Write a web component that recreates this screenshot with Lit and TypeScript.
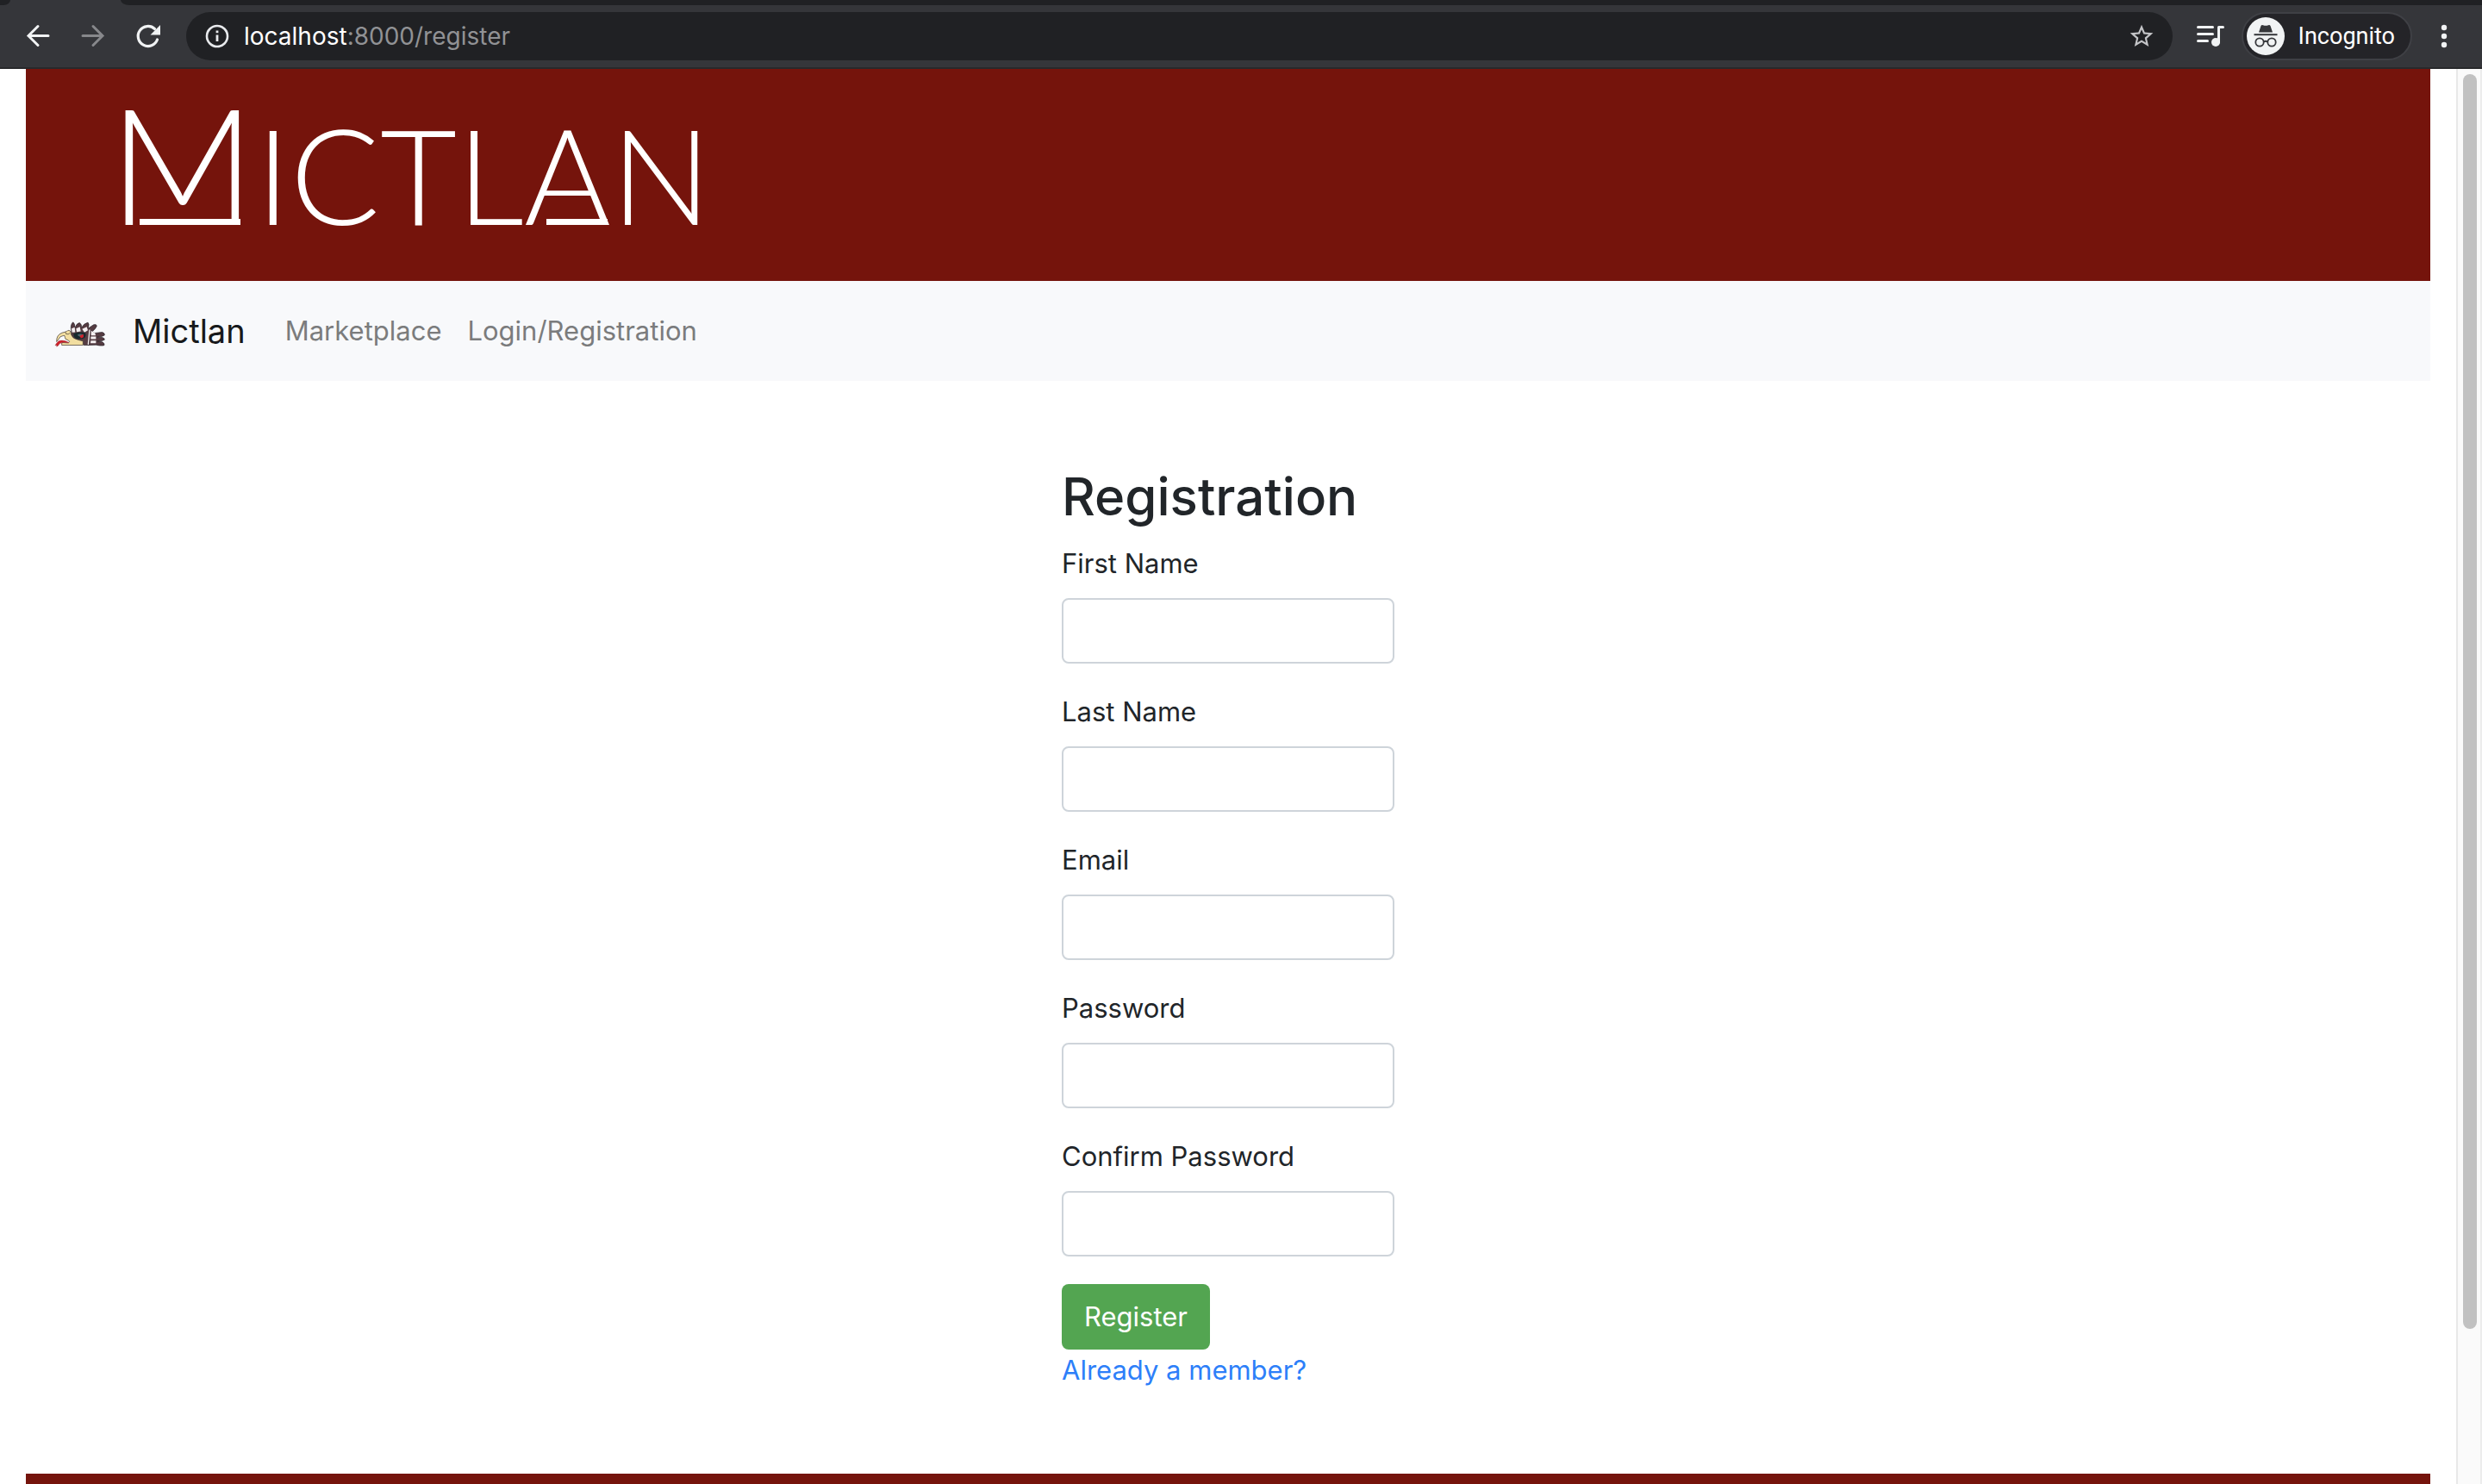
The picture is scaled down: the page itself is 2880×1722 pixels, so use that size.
import { LitElement, html, css, svg } from "lit";
import { customElement } from "lit/decorators.js";

const fields = [
  { id: "first-name", label: "First Name", type: "text" },
  { id: "last-name", label: "Last Name", type: "text" },
  { id: "email", label: "Email", type: "email" },
  { id: "password", label: "Password", type: "password" },
  { id: "confirm-password", label: "Confirm Password", type: "password" },
];

@customElement("browser-bar")
class BrowserBar extends LitElement {
  static styles = css`
    :host {
      display: block;
      flex: none;
      font-family: Roboto, "Liberation Sans", sans-serif;
      background: #35363a;
      border-bottom: 2px solid #28292b;
    }
    .tabs {
      display: flex;
      height: 6px;
      background: #35363a;
    }
    .tab-before {
      width: 12px;
      background: #202124;
      border-bottom-right-radius: 8px 6px;
    }
    .tab-active {
      width: 128px;
    }
    .tab-rest {
      flex: 1;
      background: #202124;
      border-bottom-left-radius: 10px 6px;
    }
    .tools {
      display: flex;
      align-items: center;
      padding: 8px 32px 8px 28px;
    }
    button {
      display: flex;
      align-items: center;
      border: 0;
      padding: 0;
      margin: 0;
      background: none;
      color: #f1f3f4;
      font: inherit;
    }
    svg {
      display: block;
    }
    .history {
      display: flex;
      gap: 32px;
      margin-right: 28px;
    }
    .address {
      flex: 1;
      display: flex;
      align-items: center;
      height: 56px;
      box-sizing: border-box;
      padding: 0 20px;
      border-radius: 28px;
      background: #202124;
    }
    .url {
      flex: 1;
      margin-left: 15px;
      font-family: Inter, "Liberation Sans", sans-serif;
      font-size: 28px;
      line-height: 36px;
      color: #919295;
    }
    .host {
      color: #ffffff;
    }
    .queue {
      margin: 0 18px 0 26px;
    }
    .profile {
      gap: 16px;
      height: 56px;
      box-sizing: border-box;
      padding: 0 18px 0 4px;
      border: 2px solid #3f4045;
      border-radius: 28px;
      background: #242428;
      color: #ffffff;
      font-size: 27px;
      line-height: 36px;
    }
    .menu {
      margin-left: 25px;
    }
  `;

  render() {
    return html`
      <div class="tabs">
        <div class="tab-before"></div>
        <div class="tab-active"></div>
        <div class="tab-rest"></div>
      </div>
      <div class="tools">
        <div class="history">
          <button aria-label="Back">
            <svg width="32" height="32" viewBox="0 0 32 32" fill="none" stroke="#f1f3f4" stroke-width="3" stroke-linecap="round" stroke-linejoin="miter">
              <path d="M28 15.500H5M16 4.500L5 15.500L16 26.500" />
            </svg>
          </button>
          <button aria-label="Forward">
            <svg width="32" height="32" viewBox="0 0 32 32" fill="none" stroke="#87888b" stroke-width="3" stroke-linecap="round">
              <path d="M4 15.500H27M16 4.500L27 15.500L16 26.500" />
            </svg>
          </button>
          <button aria-label="Reload">
            <svg width="32" height="32" viewBox="0 0 32 32">
              <path d="M26.500 20A11.500 11.500 0 1 1 23.500 7.500" fill="none" stroke="#f1f3f4" stroke-width="3.200" stroke-linecap="round" />
              <path d="M30 3V14.500H18.500Z" fill="#f1f3f4" />
            </svg>
          </button>
        </div>
        <div class="address">
          <svg width="32" height="32" viewBox="0 0 32 32" fill="none" stroke="#e8eaed">
            <circle cx="16" cy="16" r="12" stroke-width="2.600" />
            <path d="M16 14.500V22" stroke-width="2.800" />
            <path d="M16 9.500V12.200" stroke-width="2.800" />
          </svg>
          <span class="url"><span class="host">localhost</span>:8000/register</span>
          <button aria-label="Bookmark this page">
            <svg width="32" height="32" viewBox="0 0 24 24" fill="#c4c5c8">
              <path d="M22 9.240l-7.190-.620L12 2 9.190 8.630 2 9.240l5.460 4.730L5.820 21 12 17.270 18.180 21l-1.630-7.030L22 9.240zM12 15.400l-3.760 2.270 1-4.280-3.320-2.880 4.380-.380L12 6.100l1.710 4.040 4.380.380-3.320 2.880 1 4.280L12 15.400z" />
            </svg>
          </button>
        </div>
        <button class="queue" aria-label="Media controls">
          <svg width="36" height="32" viewBox="0 0 36 32">
            <path d="M3.500 5.500H20.500M3.500 13.500H20.500M3.500 21.500H14.500" stroke="#f1f3f4" stroke-width="3" stroke-linecap="round" />
            <circle cx="24" cy="23" r="5" fill="#f1f3f4" />
            <path d="M27.500 23V5.500H32.500" stroke="#f1f3f4" stroke-width="3" stroke-linecap="round" stroke-linejoin="round" fill="none" />
          </svg>
        </button>
        <button class="profile">
          <svg width="44" height="44" viewBox="0 0 44 44">
            <circle cx="22" cy="22" r="22" fill="#f1f3f4" />
            <path d="M14 17.500L16.500 10Q17.300 8.500 19 9.300Q22 10.300 25 9.300Q26.700 8.500 27.500 10L30 17.500Z" fill="#35363a" />
            <path d="M8.500 20.200H35.500" stroke="#35363a" stroke-width="2" />
            <g fill="none" stroke="#35363a" stroke-width="1.800">
              <circle cx="15" cy="29" r="4.700" />
              <circle cx="29" cy="29" r="4.700" />
              <path d="M19.700 28.500Q22 27 24.300 28.500" />
            </g>
          </svg>
          Incognito
        </button>
        <button class="menu" aria-label="Menu">
          <svg width="24" height="32" viewBox="0 0 24 32" fill="#f1f3f4">
            <circle cx="12" cy="6" r="3.200" />
            <circle cx="12" cy="16" r="3.200" />
            <circle cx="12" cy="26" r="3.200" />
          </svg>
        </button>
      </div>
    `;
  }
}

const bird = svg`
  <path d="M154 66L165 58L176 51Q186 48 187 55Q184 64 170 76L180 80L206 77Q215 80 214 87Q208 93 188 94L206 95Q215 98 214 103Q206 109 188 108L206 111Q215 116 213 122Q206 126 184 121L158 122Z" fill="#553c42" stroke="#292328" stroke-width="2" />
  <path d="M167 72L181 80L183 88L167 88ZM166 92H184V101H166ZM166 106H184V115H165Z" fill="#f4eff0" />
  <path d="M98 70Q94 52 104 42Q111 46 111 62Q116 46 127 44Q136 50 133 62Q142 46 156 43Q162 48 157 62L165 70L158 122H142L126 104L98 96Z" fill="#553c42" stroke="#292328" stroke-width="2" />
  <path d="M99 64L110 60L112 77L101 78ZM115 64L128 58L131 74L117 76ZM136 66L152 58L156 70L144 78Z" fill="#f4eff0" />
  <path d="M162 68L157 120" stroke="#f4eff0" stroke-width="4" />
  <path d="M47 110Q46 86 66 79Q82 76 90 70Q98 72 98 86Q104 100 120 103L139 108V122H65V113L88 114Q96 111 88 105Q74 102 76 94Q77 87 70 89Q58 90 53 103Z" fill="#f2dea0" stroke="#3a3029" stroke-width="2" />
  <path d="M83 72Q75 77 80 83Q88 86 94 80" fill="#f2dea0" stroke="#3a3029" stroke-width="2" />
  <path d="M89 112Q68 102 54 108Q45 116 42 123L48 122L47 127Q54 125 57 117Q69 110 89 114Z" fill="#cf2029" stroke="#7b1a20" stroke-width="1" />
  <path d="M106 82Q118 75 146 78Q152 88 144 97Q130 103 116 99Q105 94 106 82Z" fill="#18282d" />
  <path d="M119 87Q129 79 141 86L139 94Q128 96 119 87Z" fill="#4d6a70" />
  <path d="M127 90L140 84L141 94L132 98Z" fill="#d3212c" />
`;

@customElement("app-root")
class AppRoot extends LitElement {
  static styles = css`
    :host {
      display: flex;
      flex-direction: column;
      height: 100vh;
      overflow: hidden;
      background: #ffffff;
      color: #212529;
      font-family: Inter, "Liberation Sans", sans-serif;
      font-size: 31px;
      line-height: 48px;
    }
    .viewport {
      flex: 1;
      min-height: 0;
      display: flex;
    }
    .page {
      flex: 1;
      display: flex;
      flex-direction: column;
      padding: 0 30px;
    }
    .scrollbar {
      box-sizing: border-box;
      width: 30px;
      padding: 6px 4px 0 6px;
      border-left: 2px solid #e8e8e8;
      border-right: 2px solid #ececec;
      background: #fafafa;
    }
    .thumb {
      width: 16px;
      height: 89%;
      border-radius: 8px;
      background: #c1c1c1;
    }
    .banner {
      background: #75140c;
      color: #ffffff;
      padding: 0 96px;
      height: 246px;
      box-sizing: border-box;
    }
    .wordmark {
      margin: 0;
      padding-top: 8px;
      font-family: Lato, "Open Sans", sans-serif;
      font-weight: 300;
      font-size: 154px;
      line-height: 200px;
      text-transform: uppercase;
    }
    .initial {
      font-size: 188px;
    }
    .initial,
    .based {
      position: relative;
    }
    /* Foot bars that lie over the baseline of the M and the A. */
    .initial::after,
    .based::after {
      content: "";
      position: absolute;
      height: 7px;
      background: #ffffff;
    }
    .initial::after {
      bottom: 40px;
      left: 36px;
      right: 18px;
    }
    .based::after {
      bottom: 33px;
      left: 26px;
      right: 4px;
    }
    .nav {
      display: flex;
      align-items: center;
      height: 116px;
      padding: 0 32px;
      background: #f8f9fb;
    }
    .nav a {
      text-decoration: none;
    }
    .brand {
      display: flex;
      align-items: center;
      gap: 32px;
      margin-right: 46px;
      color: #17191b;
      font-size: 38px;
    }
    .brand svg {
      display: block;
      margin-top: 8px;
    }
    .links {
      display: flex;
      gap: 30px;
      margin: 0;
      padding: 0;
      list-style: none;
    }
    .links a {
      color: #7b7c7d;
    }
    .main {
      display: flex;
      justify-content: center;
      padding: 96px 0;
    }
    .form {
      display: flex;
      flex-direction: column;
      align-items: flex-start;
    }
    .title {
      margin: 0 0 16px;
      font-size: 60px;
      font-weight: 500;
      line-height: 76px;
    }
    .field {
      display: flex;
      flex-direction: column;
      gap: 16px;
      margin-bottom: 32px;
    }
    .field input {
      box-sizing: border-box;
      width: 386px;
      height: 76px;
      padding: 12px 24px;
      border: 2px solid #ced4da;
      border-radius: 8px;
      background: #ffffff;
      color: inherit;
      font: inherit;
    }
    .submit {
      height: 76px;
      padding: 0 26px;
      border: 0;
      border-radius: 8px;
      background: #53a551;
      color: #ffffff;
      font: inherit;
    }
    .member {
      color: #2d7ff9;
      text-decoration: none;
    }
    .footer {
      flex: 1;
      background: #75140c;
    }
  `;

  render() {
    return html`
      <browser-bar></browser-bar>
      <div class="viewport">
        <div class="page">
          <header class="banner">
            <h1 class="wordmark"><span class="initial">M</span>ictl<span class="based">a</span>n</h1>
          </header>
          <nav class="nav">
            <a class="brand" href="#home">
              <svg width="60" height="32" viewBox="36 38 180 93" aria-hidden="true">${bird}</svg>
              Mictlan
            </a>
            <ul class="links">
              <li><a href="#marketplace">Marketplace</a></li>
              <li><a href="#login">Login/Registration</a></li>
            </ul>
          </nav>
          <main class="main">
            <form class="form">
              <h2 class="title">Registration</h2>
              ${fields.map(
                (f) => html`
                  <div class="field">
                    <label for=${f.id}>${f.label}</label>
                    <input id=${f.id} name=${f.id} type=${f.type} />
                  </div>
                `
              )}
              <button class="submit" type="submit">Register</button>
              <a class="member" href="#login">Already a member?</a>
            </form>
          </main>
          <footer class="footer"></footer>
        </div>
        <div class="scrollbar"><div class="thumb"></div></div>
      </div>
    `;
  }
}
